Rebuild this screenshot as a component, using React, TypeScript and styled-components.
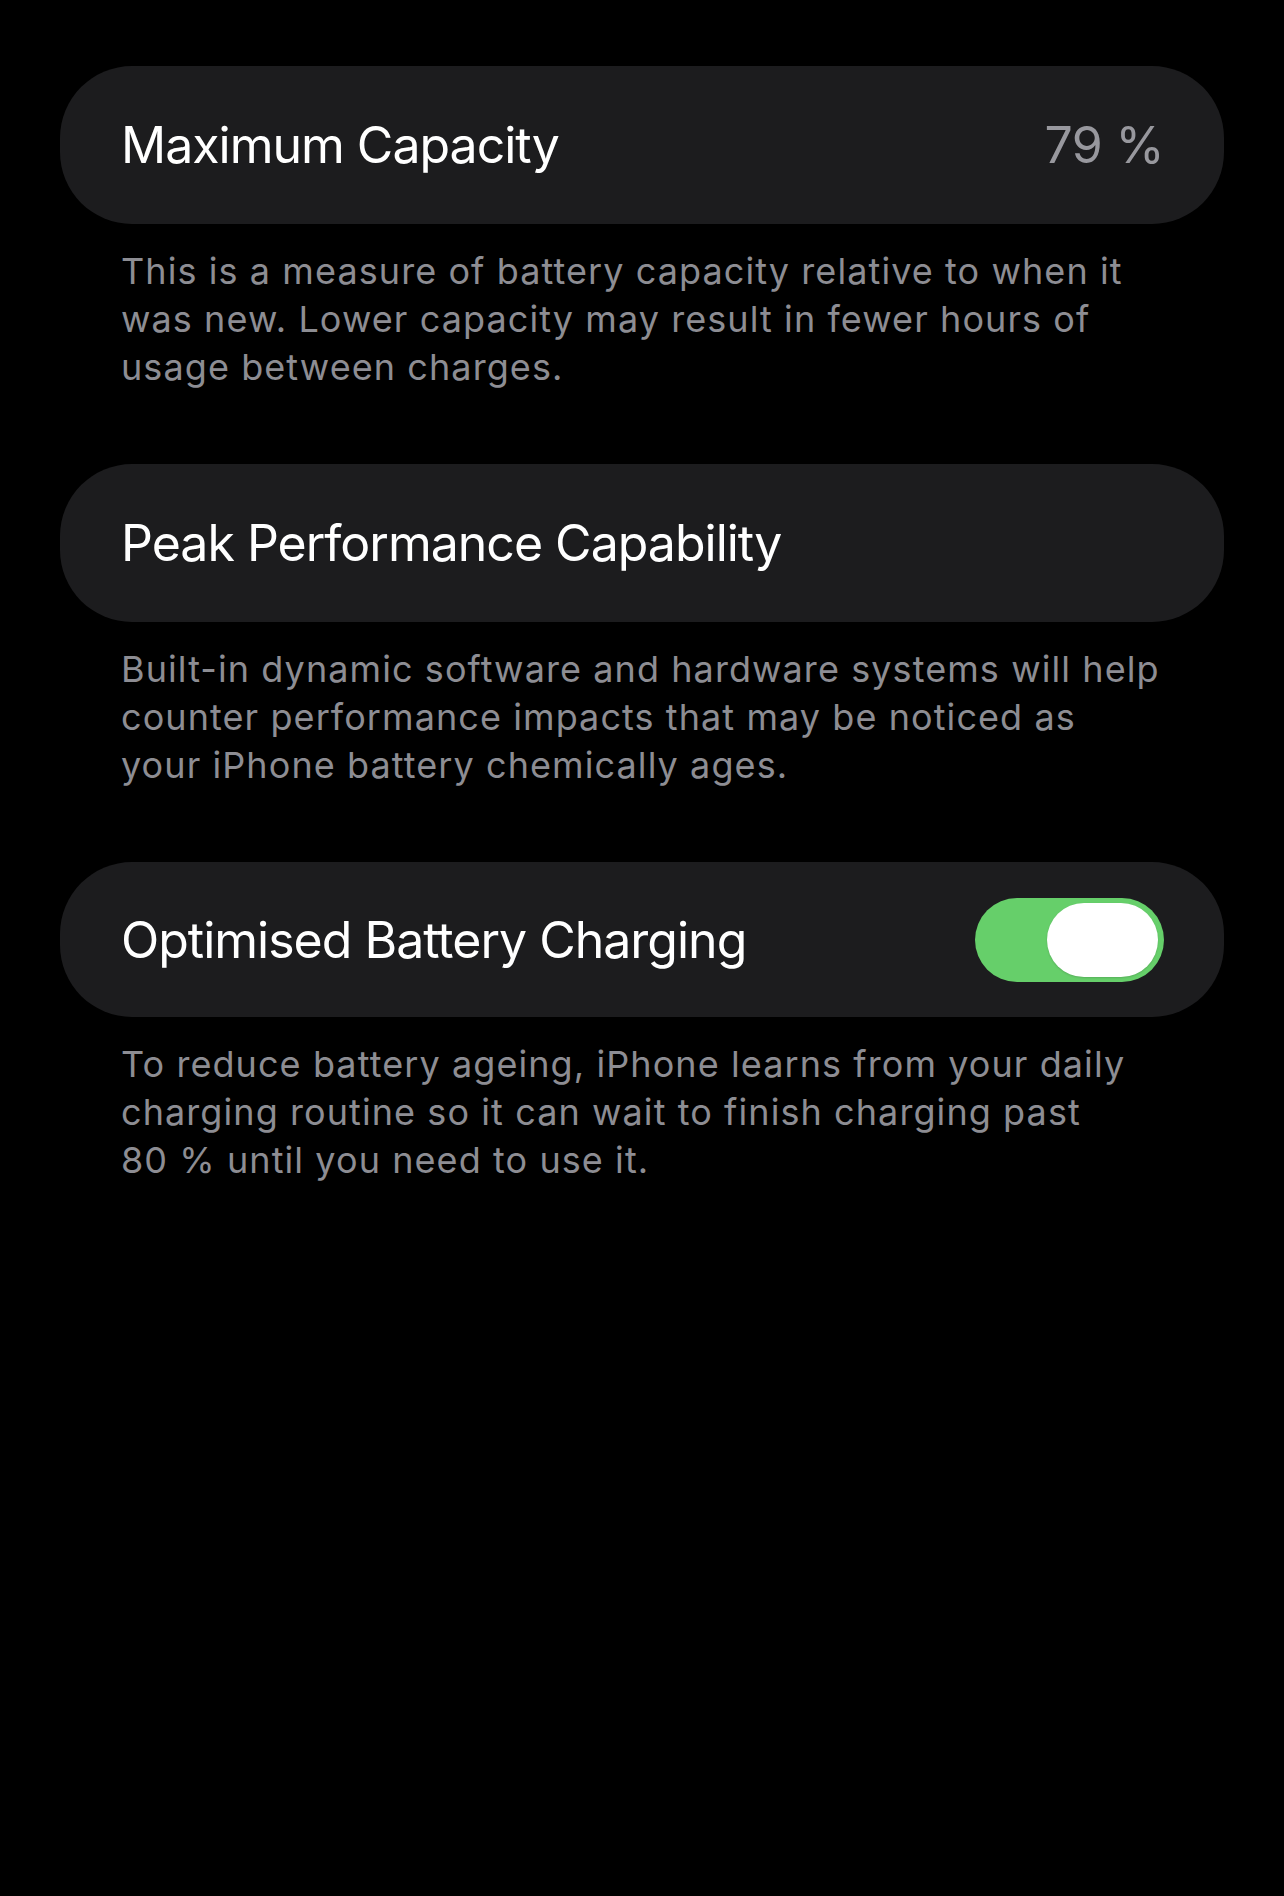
import React, { useState } from 'react';
import styled, { createGlobalStyle } from 'styled-components';

const GlobalStyle = createGlobalStyle`
  html, body {
    margin: 0;
    padding: 0;
    background: #000;
  }
  body {
    font-family: Inter, "Noto Sans", "Liberation Sans", sans-serif;
    -webkit-font-smoothing: antialiased;
  }
`;

const Page = styled.div`
  min-height: 1896px;
  box-sizing: border-box;
  padding: 66px 60px 0;
  background: #000;
  display: flex;
  flex-direction: column;
  gap: 73px;
`;

const Section = styled.section`
  display: flex;
  flex-direction: column;
`;

const Cell = styled.div<{ $height?: number }>`
  height: ${(p) => p.$height ?? 158}px;
  box-sizing: border-box;
  padding: 0 60px 0 61px;
  background: #1c1c1e;
  border-radius: 72px;
  display: flex;
  align-items: center;
  justify-content: space-between;
`;

const Label = styled.span`
  color: #fff;
  font-size: 50px;
  letter-spacing: -1px;
  line-height: 1;
`;

const Value = styled.span`
  color: #98989e;
  font-size: 50px;
  letter-spacing: -0.6px;
  line-height: 1;
`;

const Footer = styled.p`
  margin: 23px 0 0;
  padding: 0 61px;
  color: #8d8d93;
  font-size: 36px;
  line-height: 48px;
  letter-spacing: 1.08px;
`;

const Line = styled.span`
  display: block;
  white-space: nowrap;
`;

const SwitchTrack = styled.button<{ $on: boolean }>`
  position: relative;
  width: 189px;
  height: 84px;
  padding: 0;
  border: none;
  border-radius: 42px;
  background: ${(p) => (p.$on ? '#66cf6a' : '#39393d')};
  cursor: pointer;
  transition: background 0.2s ease;
`;

const SwitchKnob = styled.span<{ $on: boolean }>`
  position: absolute;
  top: 5px;
  left: ${(p) => (p.$on ? '72px' : '6px')};
  width: 111px;
  height: 74px;
  border-radius: 37px;
  background: #fff;
  box-shadow: 0 1px 2px rgba(0, 0, 0, 0.15);
  transition: left 0.2s ease;
`;

const Toggle = () => {
  const [on, setOn] = useState(true);
  return (
    <SwitchTrack $on={on} onClick={() => setOn(!on)} aria-pressed={on}>
      <SwitchKnob $on={on} />
    </SwitchTrack>
  );
};

const sections = [
  {
    label: 'Maximum Capacity',
    value: '79 %',
    footer: [
      'This is a measure of battery capacity relative to when it',
      'was new. Lower capacity may result in fewer hours of',
      'usage between charges.',
    ],
  },
  {
    label: 'Peak Performance Capability',
    footer: [
      'Built-in dynamic software and hardware systems will help',
      'counter performance impacts that may be noticed as',
      'your iPhone battery chemically ages.',
    ],
  },
  {
    label: 'Optimised Battery Charging',
    toggle: true,
    footer: [
      'To reduce battery ageing, iPhone learns from your daily',
      'charging routine so it can wait to finish charging past',
      '80 % until you need to use it.',
    ],
  },
];

const App = () => {
  return (
    <>
      <GlobalStyle />
      <Page>
        {sections.map((s) => (
          <Section key={s.label}>
            <Cell $height={s.toggle ? 155 : 158}>
              <Label>{s.label}</Label>
              {s.value && <Value>{s.value}</Value>}
              {s.toggle && <Toggle />}
            </Cell>
            <Footer>
              {s.footer.map((l) => (
                <Line key={l}>{l}</Line>
              ))}
            </Footer>
          </Section>
        ))}
      </Page>
    </>
  );
};

export default App;
